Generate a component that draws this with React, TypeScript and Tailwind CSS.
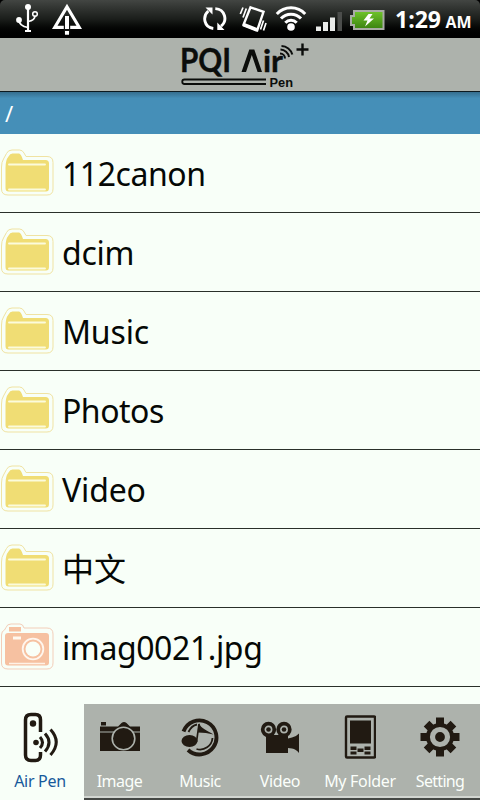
import React from 'react';
import { clsx } from 'clsx';

function UsbIcon() {
  return (
    <svg width="24" height="30" viewBox="0 0 24 30" fill="none" stroke="#fff" strokeWidth="1.7">
      <circle cx="13" cy="4" r="3" fill="#fff" stroke="none" />
      <path d="M13 4v24" strokeWidth="2.2" />
      <circle cx="4" cy="17" r="2.9" fill="#fff" stroke="none" />
      <path d="M4 17c0 4 3 6.5 9 7.5M13 18.5c5-.7 7-2.500 7-6" />
      <circle cx="20" cy="11" r="2.3" strokeWidth="1.5" />
      <path d="M10 28h6" strokeWidth="2" />
    </svg>
  );
}

function WarningIcon() {
  return (
    <svg width="32" height="33" viewBox="0 0 32 33">
      <path d="M16 4.800L3.800 25.300h24.400z" fill="none" stroke="#fff" strokeWidth="3.200" />
      <path d="M12.800 14h6.400v18h-6.400z" fill="#101210" />
      <path d="M14 14h4v13h-4zM14 29h4v3.800h-4z" fill="#fff" />
    </svg>
  );
}

function SyncIcon() {
  return (
    <svg width="24" height="26" viewBox="0 0 24 26" fill="none" stroke="#fff" strokeWidth="2.9">
      <path d="M10.300 22.500C1 21.500 -.8 10.500 5.300 5" />
      <path d="M12.300 2.600c9.700 .5 12.700 12 5.700 17.500" />
      <path d="M2.500 1.500h7v7zM14.300 16.500v7.500h7.200z" fill="#fff" stroke="none" />
    </svg>
  );
}

function VibrateIcon() {
  return (
    <svg width="28" height="28" viewBox="0 0 28 28" fill="none" stroke="#fff">
      <path d="M11.500 2.300l13 4.500-6.300 18.500-13.700-5.500z" strokeWidth="2.400" />
      <path d="M4.200 19.500l14 5.500" strokeWidth="3.600" />
      <path d="M4 2.500L1.300 9M7.300 3.500L4 12.500M24.500 15.500l-3 9M27 18l-2.500 7.500" strokeWidth="1.700" />
    </svg>
  );
}

function WifiIcon() {
  return (
    <svg width="32" height="28" viewBox="0 0 32 28" fill="none" stroke="#fff" strokeWidth="3">
      <circle cx="16" cy="23" r="3.8" fill="#fff" stroke="none" />
      <path d="M1.8 10a19.500 19.500 0 0 1 28.400 0" />
      <path d="M6 14.600a13.500 13.500 0 0 1 20 0" />
      <path d="M10.3 18.800a7.800 7.800 0 0 1 11.400 0" />
    </svg>
  );
}

function SignalIcon() {
  return (
    <svg width="27" height="20" viewBox="0 0 27 20">
      <path d="M0 14.500h5V19H0zM7 10h5v9H7zM14 5.500h5V19h-5z" fill="#e9ebe9" />
      <path d="M21.500 0h4.500v19h-4.500z" fill="#4b4d4b" />
    </svg>
  );
}

function BatteryIcon() {
  return (
    <svg width="35" height="20" viewBox="0 0 35 20">
      <defs>
        <linearGradient id="battery-fill" x1="0" y1="0" x2="0" y2="1">
          <stop offset="0%" stopColor="#70c52a" />
          <stop offset="100%" stopColor="#3b8210" />
        </linearGradient>
      </defs>
      <path d="M4 1h29.500v18H4v-4H1V6h3z" fill="url(#battery-fill)" stroke="#a9aca5" strokeWidth="2" />
      <path d="M18.5 4h4L19.500 8.500h4.500l-9 8 2.500-6h-4z" fill="#fff" />
    </svg>
  );
}

function StatusBar() {
  return (
    <div className="h-[38px] shrink-0 bg-black">
      <div className="flex h-full items-start rounded-t-[5px] bg-gradient-to-b from-[#434643] via-[#1b1e1b] to-black text-white">
        <div className="ml-[15px] mt-[3px]"><UsbIcon /></div>
        <div className="ml-[12px] mt-[2px]"><WarningIcon /></div>
        <div className="ml-[120px] mt-[6px]"><SyncIcon /></div>
        <div className="ml-[12px] mt-[5px]"><VibrateIcon /></div>
        <div className="ml-[8px] mt-[4px]"><WifiIcon /></div>
        <div className="ml-[9px] mt-[12px]"><SignalIcon /></div>
        <div className="ml-[7px] mt-[10px]"><BatteryIcon /></div>
        <svg className="ml-[8px]" width="86" height="38" fill="#fff" fontFamily="'Open Sans', sans-serif" fontWeight="700">
          <text x="2" y="28" fontSize="23.500" textLength="46" lengthAdjust="spacingAndGlyphs">1:29</text>
          <text x="52.500" y="28" fontSize="16.500" textLength="26" lengthAdjust="spacingAndGlyphs">AM</text>
        </svg>
      </div>
    </div>
  );
}

function Logo() {
  return (
    <svg width="132" height="53" viewBox="0 0 132 53" fill="#0b0d0b">
      <g fontFamily="Lato, sans-serif" fontWeight="700" stroke="#0b0d0b" strokeWidth=".4">
        <text x="2" y="34" fontSize="32" textLength="51" lengthAdjust="spacingAndGlyphs">PQI</text>
        <text x="85" y="34" fontSize="31" textLength="20" lengthAdjust="spacingAndGlyphs">ir</text>
      </g>
      <path d="M63.500 34h4.500l5.800-17 5.800 17H84L76.300 11.500h-5z" />
      <g fill="none" stroke="#0b0d0b" strokeWidth="2">
        <path d="M102 15.500a5 5 0 0 1 5 5M102.500 11.500a9 9 0 0 1 8.500 7.500M103.500 8a11.500 11.500 0 0 1 10.800 8.500" />
        <path d="M118.500 11.500h12M124.500 5.500v12" strokeWidth="2.400" />
        <path d="M88 41.500H6.500a2.200 2.200 0 0 0 0 4.500H88" strokeWidth="1.800" />
      </g>
      <text x="91.500" y="48.500" fontFamily="'Liberation Sans', sans-serif" fontWeight="700" fontSize="12.500" textLength="23.500" lengthAdjust="spacingAndGlyphs">Pen</text>
    </svg>
  );
}

function FolderIcon() {
  return (
    <svg width="54" height="50" viewBox="0 0 54 50" fill="none">
      <path d="M6.500 5.500Q8 2 12 2h7.500q3 0 4.500 3l2 3.500h21q6 0 6 6V41q0 6-6 6H8q-6.500 0-6.500-6V19q0-5 2-8z" stroke="#f0e3a2" />
      <path d="M8.500 8.500q1.500-3 4-3h6.500q2 0 4 6.500h22.500q3.500 0 3.500 3.500v24.500q0 3.500-3 3.500H8.500q-3 0-3-3.500V20Q5.500 12 8.500 8.500z" fill="#f0dd74" />
      <path d="M9 16.500h36M9 41.500h36" stroke="#fbfbdc" strokeWidth="1.9" strokeLinecap="round" />
    </svg>
  );
}

function PhotoIcon() {
  return (
    <svg width="54" height="50" viewBox="0 0 54 50" fill="none">
      <path d="M6 5.500Q7 2 11 2h9q3 0 4 4h23q6 0 6 6v29q0 6-6 6H8q-6.500 0-6.500-6V13q0-4 3-5z" stroke="#f3ceb9" />
      <path d="M9 5h12v4.500H9zM8 11h38q3 0 3 3v26.500q0 3-3 3H8q-3 0-3-3V14q0-3 3-3z" fill="#f6c1a1" />
      <path d="M13 14.500h8v3h-8z" fill="#fff8ef" />
      <circle cx="33" cy="27" r="10.300" stroke="#fff6ee" strokeWidth="1.8" />
      <circle cx="33" cy="27" r="7.5" fill="#f9fff8" />
      <path d="M9 41.500h36" stroke="#fff2e6" strokeWidth="1.5" />
    </svg>
  );
}

interface Entry {
  name: string;
  kind: 'folder' | 'photo';
  tracking: string;
}

const entries: Entry[] = [
  { name: '112canon', kind: 'folder', tracking: 'tracking-[-0.45px]' },
  { name: 'dcim', kind: 'folder', tracking: 'tracking-[-0.3px]' },
  { name: 'Music', kind: 'folder', tracking: 'tracking-[-0.15px]' },
  { name: 'Photos', kind: 'folder', tracking: 'tracking-[-0.5px]' },
  { name: 'Video', kind: 'folder', tracking: 'tracking-[-0.15px]' },
  { name: '中文', kind: 'folder', tracking: 'tracking-normal' },
  { name: 'imag0021.jpg', kind: 'photo', tracking: 'tracking-[-0.4px]' },
];

function FileRow({ name, kind, tracking }: Entry) {
  return (
    <li className="flex h-[79px] items-center border-b border-[#2a302a]">
      {kind === 'folder' ? <FolderIcon /> : <PhotoIcon />}
      <span className={clsx('ml-[8px] mt-[2px] text-[32px] leading-[44px] text-[#050805]', tracking)}>{name}</span>
    </li>
  );
}

function PenIcon() {
  return (
    <svg width="40" height="52" viewBox="0 0 40 52" fill="none" stroke="#211a12" strokeWidth="3.500">
      <path d="M20.500 20V8q0-5.500-5-5.500H11Q5.500 2.500 5.500 8v35q0 5.500 5.500 5.500h4.500q5 0 5-5.500v-3" />
      <circle cx="13" cy="11.500" r="3.200" fill="#211a12" stroke="none" />
      <circle cx="16" cy="30.500" r="2.800" fill="#211a12" stroke="none" />
      <path d="M20 25q5 5.500 0 11M25 21.500q8 9 0 18M30.500 17.500q11.500 12.500 0 25.500" strokeWidth="3" />
    </svg>
  );
}

function CameraIcon() {
  return (
    <svg width="42" height="32" viewBox="0 0 42 32" fill="#211a12">
      <path d="M2 1h5v3.500H2zM1 5.500h18l3.500-3.500q2.500-2 5 0l3.500 3.500h10v5H1zM1 11.500h40V30H1z" />
      <circle cx="24.5" cy="17.500" r="11.300" fill="#211a12" stroke="#adb2ac" strokeWidth="1.6" />
    </svg>
  );
}

function MusicIcon() {
  return (
    <svg width="40" height="40" viewBox="0 0 40 40" fill="none" stroke="#211a12">
      <path d="M3.500 14.500A17 17 0 1 1 8 33" strokeWidth="3.900" />
      <path d="M8.500 15q3-6.500 8.500-7.500M32.500 21a12.500 12.500 0 0 1-16 11" strokeWidth="1.8" />
      <ellipse cx="9.500" cy="24" rx="8" ry="6" fill="#211a12" stroke="none" />
      <path d="M16.500 25L19 7" strokeWidth="1.7" />
      <path d="M19 6c2 6 8 7 14.500 11.500-5-1.200-10-2-15.500-2z" fill="#211a12" stroke="none" />
    </svg>
  );
}

function VideoIcon() {
  return (
    <svg width="40" height="34" viewBox="0 0 40 34" fill="#211a12">
      <path d="M6 15h22v3.500l4-1q5-1.500 7-4V33q-3-4-7-4.500l-4-.5v5H6z" />
      <g stroke="#211a12" strokeWidth="3.7">
        <circle cx="8.5" cy="9.500" r="5.8" fill="#adb2ac" />
        <circle cx="24" cy="9.500" r="5.8" fill="#adb2ac" />
      </g>
      <circle cx="8.5" cy="9.500" r="2.3" />
      <circle cx="24" cy="9.500" r="2.3" />
    </svg>
  );
}

function DeviceIcon() {
  return (
    <svg width="32" height="44" viewBox="0 0 32 44" fill="#211a12">
      <rect x="2" y="1.500" width="29" height="41" rx="1" fill="none" stroke="#211a12" strokeWidth="2.400" />
      <path d="M6 5.500h21v23H6zM6.500 31.500h6V35h-6zM20.500 31.500h6V35h-6zM13.500 33.500h6V37h-6zM6.500 36.500h6v3h-6zM20.500 36.500h6v3h-6z" />
    </svg>
  );
}

function GearIcon() {
  return (
    <svg width="40" height="40" viewBox="-20 -20 40 40">
      <g fill="#211a12">
        <circle r="14" />
        <path d="M-4-19.500h8v39h-8zM-19.500-4h39v8h-39z" />
        <path d="M-4-19h8v38h-8zM-19-4h38v8h-38z" transform="rotate(45)" />
      </g>
      <circle r="7.500" fill="#211a12" stroke="#adb2ac" strokeWidth="5.200" />
    </svg>
  );
}

const tabs = [
  { label: 'Image', icon: <CameraIcon />, style: 'w-[71px] tracking-[-0.5px]' },
  { label: 'Music', icon: <MusicIcon />, style: 'w-[90px] tracking-[-0.5px]' },
  { label: 'Video', icon: <VideoIcon />, style: 'w-[70px] tracking-[-0.4px]' },
  { label: 'My Folder', icon: <DeviceIcon />, style: 'w-[90px] tracking-[-0.3px]' },
  { label: 'Setting', icon: <GearIcon />, style: 'w-[70px] tracking-[-0.7px]' },
];

function TabBar() {
  return (
    <nav className="mt-[17px] flex h-[96px] text-[16px] leading-[20px]">
      <div className="flex w-[84px] shrink-0 flex-col items-center pr-[4px] tracking-[-0.3px] text-[#175a9b]">
        <div className="flex h-[67px] items-center"><PenIcon /></div>
        <span>Air Pen</span>
      </div>
      <div className="flex flex-1 border-b-2 border-[#454845] bg-[#adb2ac] text-[#fbfffb]">
        <div className="flex flex-1 border-b-2 border-[#d2d6d1]">
          {tabs.map((tab) => (
            <div key={tab.label} className={clsx('flex shrink-0 flex-col items-center', tab.style)}>
              <div className="flex h-[67px] items-center pb-px">{tab.icon}</div>
              <span className="whitespace-nowrap">{tab.label}</span>
            </div>
          ))}
        </div>
      </div>
    </nav>
  );
}

export default function App() {
  return (
    <div className="flex h-[800px] w-[480px] flex-col overflow-hidden bg-[#f8fff8] font-['Noto_Sans','Noto_Sans_CJK_SC',sans-serif]">
      <StatusBar />
      <header className="flex h-[54px] shrink-0 justify-center border-b border-[#0c1a20] bg-[#adb2ac] pl-[8px]">
        <Logo />
      </header>
      <div className="flex h-[42px] shrink-0 items-center bg-gradient-to-b from-[#356e8e] via-[#458fb8] via-15% to-[#458fb8] pl-[5px] text-[22px] text-white">
        /
      </div>
      <ul>
        {entries.map((entry) => (
          <FileRow key={entry.name} {...entry} />
        ))}
      </ul>
      <TabBar />
    </div>
  );
}
